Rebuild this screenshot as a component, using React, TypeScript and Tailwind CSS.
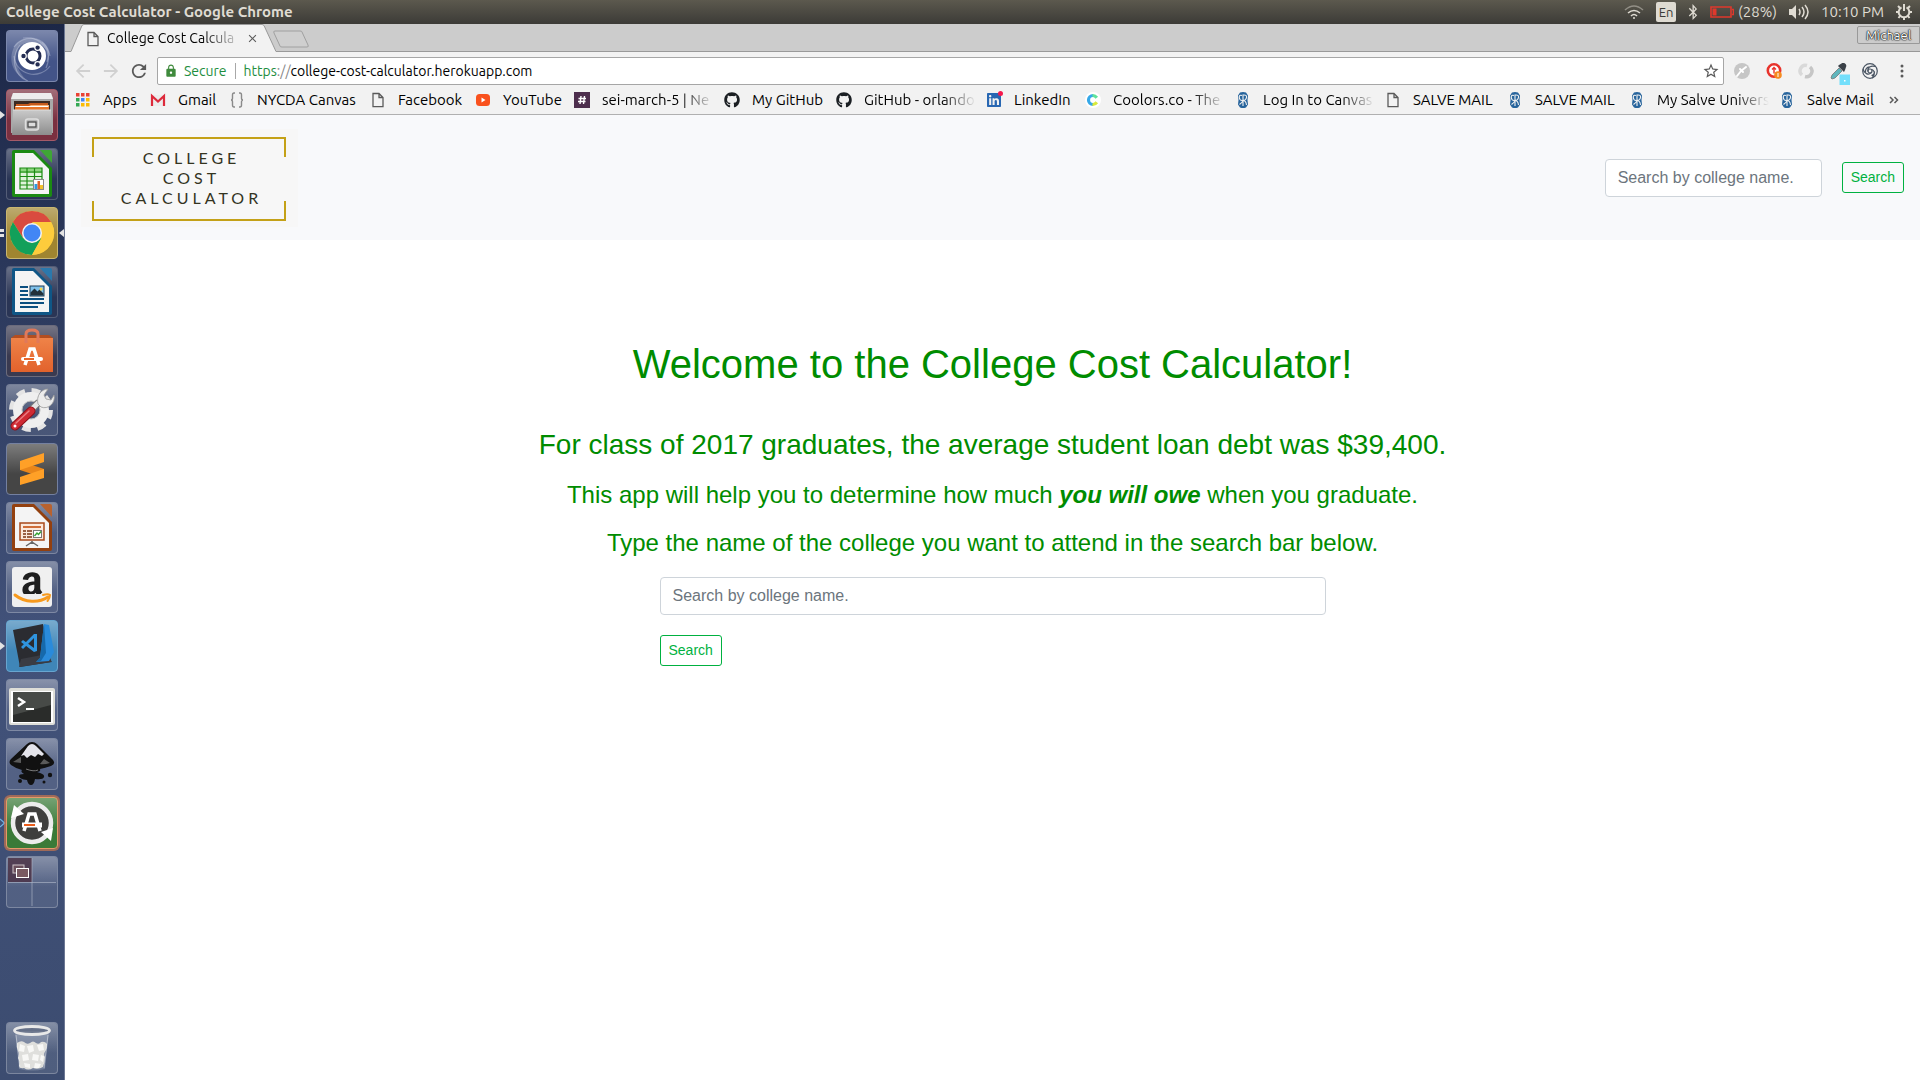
import React from "react";
import { FaAmazon, FaGithub, FaBluetoothB, FaLinkedin } from "react-icons/fa";
import { MdRefresh, MdArrowBack, MdArrowForward, MdStarBorder, MdLock, MdClose } from "react-icons/md";

type Kids = { children: React.ReactNode };

/* ---------- launcher ---------- */

function Art({ children }: Kids) {
  return (
    <svg viewBox="0 0 52 52" className="h-full w-full" aria-hidden="true">
      {children}
    </svg>
  );
}

function DashIcon() {
  return (
    <Art>
      <g fill="none" stroke="#c3cbe0" strokeOpacity=".4" strokeWidth="1.2">
        <path d="M8 17C16 4 40 4 44 26" />
        <path d="M17 8C34 6 48 20 40 38" />
        <path d="M44 36C34 50 10 46 8 26" />
        <path d="M22 51C8 46 4 28 14 15" />
        <path d="M36 12c6 5 8 12 5 20" />
      </g>
      <path d="M8 17C16 4 40 4 44 26c-4-12-20-18-30-10C6 24 10 42 22 51 6 44 2 30 8 17Z" fill="#fff" fillOpacity=".2" />
      <circle cx="26" cy="26" r="14" fill="#fff" />
      <circle cx="27" cy="26" r="7" fill="none" stroke="#232c52" strokeWidth="3" />
      <g fill="#232c52" stroke="#fff" strokeWidth="1.2">
        <circle cx="17.5" cy="26" r="2.8" />
        <circle cx="31.6" cy="17.6" r="2.8" />
        <circle cx="31.6" cy="34.4" r="2.8" />
      </g>
    </Art>
  );
}

function FilesIcon() {
  return (
    <Art>
      <defs>
        <linearGradient id="cab" x1="0" y1="0" x2="0" y2="1">
          <stop offset="0" stopColor="#c9c9c9" />
          <stop offset="1" stopColor="#8d8d8d" />
        </linearGradient>
      </defs>
      <path d="M7 4h38l2 5v35H5V9Z" fill="#a9a9a9" />
      <path d="M7 4h38l2 6H5Z" fill="#ededed" />
      <rect x="8" y="12" width="36" height="12" fill="#3d2a22" />
      <path d="M10 15h12l2-1h18v8H10Z" fill="#c65a1c" />
      <path d="M9 17h14l2-1h18v6H9Z" fill="#f6b27a" />
      <rect x="9" y="18" width="34" height="5" fill="#e8772b" />
      <rect x="10" y="17" width="32" height="1" fill="#fff" />
      <path d="M7 21h38l1 25H6Z" fill="url(#cab)" />
      <path d="M7 21h38" stroke="#ddd" />
      <rect x="19.500" y="30" width="13" height="11" rx="2.500" fill="#b5b5b5" stroke="#dedede" strokeWidth="1.500" />
      <rect x="22" y="33" width="8" height="5" fill="#ddd" stroke="#444" strokeWidth="1.200" />
    </Art>
  );
}

function OfficePage({ edge, fold, children }: Kids & { edge: string; fold: string }) {
  return (
    <Art>
      <path d="M8 2h20l18 18v27a2 2 0 0 1-2 2H8a2 2 0 0 1-2-2V4a2 2 0 0 1 2-2Z" fill={edge} />
      <path d="M9 5h18l16 16v25H9Z" fill="#f4f4f4" />
      <path d="M34 2h10a2 2 0 0 1 2 2v11Z" fill={fold} />
      {children}
    </Art>
  );
}

function CalcIcon() {
  return (
    <OfficePage edge="#1b8a12" fold="#3fa636">
      <rect x="14" y="20" width="22" height="21" fill="#dff3da" />
      <rect x="14" y="20" width="22" height="5" fill="#8ed67f" />
      <path d="M14 20h22v21H14ZM14 24h22M14 28.500h22M14 33h22M14 37h22M21 20v21M28.500 20v21" fill="none" stroke="#1b8a12" strokeWidth="1.200" />
      <rect x="27.500" y="31.500" width="10" height="10" fill="#fff" stroke="#888" />
      <path d="M28.500 36h3v5h-3Z" fill="#2f9be0" />
      <path d="M31.500 33h2.500v8h-2.500Z" fill="#e0652a" />
      <path d="M34 37h3v4h-3Z" fill="#f2c12e" />
    </OfficePage>
  );
}

function WriterIcon() {
  return (
    <OfficePage edge="#0f5686" fold="#2b78ac">
      <path d="M14 21h8M14 25h8M14 29h8M14 33h24M14 37h24M14 41h18" stroke="#0b4f80" strokeWidth="1.800" />
      <rect x="24" y="20" width="14" height="10" fill="#7fc1ea" stroke="#1b3d58" />
      <path d="M24.500 29.500v-3l4-4 3 3 2-2 4 4v2Z" fill="#22303a" />
      <circle cx="35" cy="23" r="1.500" fill="#f6d54a" />
    </OfficePage>
  );
}

function ImpressIcon() {
  return (
    <OfficePage edge="#93400f" fold="#b8622f">
      <path d="M26 39v3M26 40l-6 4M26 40l6 4" stroke="#666" strokeWidth="1.500" />
      <rect x="14" y="21" width="24" height="17" fill="#fbe9dd" stroke="#a8481a" strokeWidth="1.500" />
      <path d="M17 25h18" stroke="#cf6d38" strokeWidth="2" />
      <path d="M17 29h3M17 32h3M17 35h3M21 29h5M21 32h5M21 35h5" stroke="#7a3514" strokeWidth="1.600" />
      <rect x="27.500" y="28.500" width="8" height="7" fill="#fff" stroke="#777" />
      <path d="m28.500 34 2.500-3 1.500 1.500 2.500-3" fill="none" stroke="#36a333" strokeWidth="1.400" />
    </OfficePage>
  );
}

function ChromeIcon() {
  return (
    <Art>
      <circle cx="26" cy="26" r="22" fill="#fdcc3c" />
      <path d="M6.900 15A22 22 0 0 1 45.100 15L26 16l-9 15Z" fill="#d94b3f" />
      <path d="M6.900 15A22 22 0 0 0 26 48l9.500-17L26 36l-9-5Z" fill="#12a05a" />
      <path d="M45.100 15H26l9.500 16L26 48A22 22 0 0 0 45.100 15Z" fill="#fdcc3c" />
      <circle cx="26" cy="26" r="10" fill="#f3f3f3" />
      <circle cx="26" cy="26" r="8.500" fill="#4286f5" />
    </Art>
  );
}

function SoftwareIcon() {
  return (
    <Art>
      <defs>
        <linearGradient id="bag" x1="0" y1="0" x2="0" y2="1">
          <stop offset="0" stopColor="#ef8348" />
          <stop offset="1" stopColor="#e2622c" />
        </linearGradient>
      </defs>
      <path d="M5 13 9 10h34l4 3Z" fill="#b34e20" />
      <path d="M5 13h42v34H5Z" fill="url(#bag)" />
      <path d="M20 18V9q0-4 6-4t6 4v9" fill="none" stroke="#e0795a" strokeWidth="3" />
      <path d="m19 40 5-16h4l5 16" fill="none" stroke="#fff" strokeWidth="3.500" />
      <path d="M17 34h18" stroke="#fff" strokeWidth="4" strokeLinecap="round" />
      <path d="M18 34h10" stroke="#e8672b" strokeWidth="1.800" />
    </Art>
  );
}

function SettingsIcon() {
  return (
    <Art>
      <circle cx="25" cy="26" r="19" fill="none" stroke="#e4e4e4" strokeWidth="6" strokeDasharray="8.400 6.520" />
      <circle cx="25" cy="26" r="13.500" fill="none" stroke="#efefef" strokeWidth="9" />
      <circle cx="25" cy="26" r="9" fill="none" stroke="#bdbdbd" strokeWidth="1" />
      <path d="M20 31 33 18" stroke="#777" strokeWidth="7" />
      <path d="M21 30 35 16" stroke="#e6e6e6" strokeWidth="5" />
      <path d="M32 20c-2-8 3-15 10-15l-4 6 2 4 5 1 3-5c2 8-6 15-13 12Z" fill="#ececec" stroke="#999" strokeWidth=".8" />
      <path d="M9 42 25 27" stroke="#8c1019" strokeWidth="9" strokeLinecap="round" />
      <path d="M9 42 25 27" stroke="#cf2a33" strokeWidth="7" strokeLinecap="round" />
      <path d="m10 39 13-12" stroke="#ea7b80" strokeWidth="1.500" strokeLinecap="round" />
      <circle cx="9" cy="42" r="1.500" fill="#fff" />
    </Art>
  );
}

function SublimeIcon() {
  return (
    <Art>
      <path d="m14 18 24 8v9l-24-8Z" fill="#e9861a" />
      <path d="m14 18 24-8v9l-24 8Z" fill="#ffa027" />
      <path d="m14 34 24-8v9l-24 7Z" fill="#ffa027" />
    </Art>
  );
}

function AmazonIcon() {
  return (
    <Art>
      <defs>
        <clipPath id="letter"><rect x="6" y="4" width="40" height="29" /></clipPath>
      </defs>
      <rect x="6" y="6" width="40" height="40" rx="3" fill="#f0f0f0" />
      <g clipPath="url(#letter)">
        <FaAmazon x="8" y="9" size={36} color="#1e1e1e" />
      </g>
      <path d="M9 34c10 8 24 8 33 2" fill="none" stroke="#f79a1e" strokeWidth="3" strokeLinecap="round" />
      <path d="M37 34q5-1.500 7 0 0 3-2.500 6" fill="none" stroke="#f79a1e" strokeWidth="2" strokeLinecap="round" />
    </Art>
  );
}

function CodeIcon() {
  return (
    <Art>
      <path d="M7 10 37 4l8 38-31 5Z" fill="#2b2c31" />
      <path d="m15 39 26-5 5 8-33 5Z" fill="#3a3c43" />
      <path d="M31 14v17l-3 1-13-10 2-2 11 8V18L17 29l-2-2 13-13Z" fill="#2f94df" />
      <path d="M38 4 43 5 48 32l-5 9-13 1 4-4Z" fill="#2a8bdb" />
      <path d="M38 4 34 38l-4 4 5-1 5-8Z" fill="#1669ab" />
    </Art>
  );
}

function TerminalIcon() {
  return (
    <Art>
      <rect x="3" y="9" width="46" height="37" rx="2" fill="#deded8" />
      <rect x="5" y="12" width="42" height="32" fill="#fff" />
      <rect x="7" y="13" width="38" height="30" fill="#2a2c2a" />
      <path d="M7 13h38v13L7 36Z" fill="#474a47" />
      <path d="m12 19 6 4-6 4" fill="none" stroke="#fff" strokeWidth="2.500" />
      <path d="M20 30h8" stroke="#fff" strokeWidth="2" />
    </Art>
  );
}

function InkscapeIcon() {
  return (
    <Art>
      <path d="M26 4q3 0 5 2l16 16q3 4-2 6-6 2-11 3 1 3-3 3 8 2 7 5-1 3-9 2-1 6-4 6t-4-5q-8-1-8-4 0-2 5-2-4-2-2-4Q9 30 5 27q-3-3 0-6L21 6q2-2 5-2Z" fill="#111" />
      <path d="M26 6q2 0 4 2l8 8-2 2-4-2-3 3-4-2-4 3-3-3-3 1 7-10q2-2 4-2Z" fill="#e4e4ea" />
      <path d="m7 24 8-5v6ZM38 21l6 4q-6 2-10 1Z" fill="#5a5a5a" />
      <path d="M20 31q8 3 12 1" fill="none" stroke="#777" />
      <circle cx="44" cy="37" r="2.200" fill="#111" />
      <circle cx="14" cy="43" r="2" fill="#111" />
      <circle cx="38" cy="44" r="1.500" fill="#111" />
    </Art>
  );
}

function UpdaterIcon() {
  return (
    <Art>
      <circle cx="26" cy="26" r="19" fill="#3f3f3d" stroke="#ececec" strokeWidth="4.500" />
      <path d="m5 21 3-13 10 9Z" fill="#fff" />
      <path d="m47 31-2 13-10-9Z" fill="#fff" />
      <path d="m18 34 5-17h6l5 17" fill="none" stroke="#fff" strokeWidth="3.500" />
      <path d="M16 28h20" stroke="#fff" strokeWidth="5" />
      <path d="M18 28h11" stroke="#ea5d1b" strokeWidth="2.200" />
    </Art>
  );
}

function WorkspaceIcon() {
  return (
    <Art>
      <rect x="2" y="2" width="24" height="24" fill="#4b3347" fillOpacity=".85" />
      <path d="M26 2v48M2 26.500h48" stroke="#b4bccd" strokeOpacity=".6" />
      <rect x="7" y="9" width="11" height="8" fill="#6a4f5c" stroke="#cdc4c8" />
      <rect x="10.500" y="12.500" width="12" height="9" fill="#7a5a62" stroke="#fff" />
    </Art>
  );
}

function TrashIcon() {
  return (
    <Art>
      <path d="M9 9h34l-4 38q-13 3-26 0Z" fill="#cfd6e4" fillOpacity=".25" />
      <path d="M11 21q4-3 7-1 3 3 6 1 3-3 6 0 3 2 5-1 4-1 6 2 0 4-1 6-3 4-1 7 0 4-2 10-5 3-10 1-5 3-9 0-4 1-5-2 1-5-1-8 2-4 0-7-2-4-1-8Z" fill="#dfdfdc" />
      <g fill="#f8f8f6">
        <path d="m14 22 5 2-1 6-5-1ZM21 24l6-1 1 6-5 2ZM31 23l6-1 1 6-5 1ZM16 33l6-1 1 6-6 1ZM27 32l6 1-1 6-6-1ZM35 33l3 1-1 6-3-2ZM18 41l6 1v4l-5-1ZM29 41l6 1-2 4h-5Z" />
      </g>
      <ellipse cx="26" cy="8.500" rx="17.500" ry="4" fill="#59627a" fillOpacity=".6" stroke="#e8e8e8" strokeWidth="2.800" />
      <path d="m10 13 4 33M42 13l-4 33" stroke="#fff" strokeOpacity=".4" />
    </Art>
  );
}

const DARK = "bg-[#2a3555] border-white/20";
const MIST = "bg-white/10 border-white/25";
const apps: { name: string; tint: string; icon: React.ReactNode; mark?: string; open?: boolean }[] = [
  { name: "Search your computer", tint: "bg-[#435488] border-white/30", icon: <DashIcon /> },
  { name: "Files", tint: "bg-[#7a3040] border-[#a55a68]", icon: <FilesIcon />, mark: "one" },
  { name: "LibreOffice Calc", tint: DARK, icon: <CalcIcon /> },
  { name: "Google Chrome", tint: "bg-[#a08530] border-[#c9b670]", icon: <ChromeIcon />, mark: "two", open: true },
  { name: "LibreOffice Writer", tint: DARK, icon: <WriterIcon /> },
  { name: "Ubuntu Software", tint: "bg-[#3a3a50] border-white/25", icon: <SoftwareIcon /> },
  { name: "System Settings", tint: MIST, icon: <SettingsIcon /> },
  { name: "Sublime Text", tint: "bg-[#454545] border-[#7480a0]", icon: <SublimeIcon /> },
  { name: "LibreOffice Impress", tint: MIST, icon: <ImpressIcon /> },
  { name: "Amazon", tint: MIST, icon: <AmazonIcon /> },
  { name: "Visual Studio Code", tint: "bg-[#3f86b8] border-[#68a5cf]", icon: <CodeIcon />, mark: "one" },
  { name: "Terminal", tint: MIST, icon: <TerminalIcon /> },
  { name: "Inkscape", tint: MIST, icon: <InkscapeIcon /> },
  { name: "Software Updater", tint: "bg-[#3a7a38] border-[#e59a6a] ring-2 ring-[#e07b45]/60", icon: <UpdaterIcon />, mark: "outline" },
  { name: "Workspace Switcher", tint: MIST, icon: <WorkspaceIcon /> },
];

function Mark({ kind }: { kind: string }) {
  return (
    <svg viewBox="0 0 6 10" className="absolute top-1/2 -left-[6px] h-[10px] w-[6px] -translate-y-1/2" aria-hidden="true">
      {kind === "one" && <path d="M0 1 5 5 0 9Z" fill="#e3e3e3" />}
      {kind === "two" && <path d="M0 1h4v3H0ZM0 6h4v3H0Z" fill="#e3e3e3" />}
      {kind === "outline" && <path d="M0 1 4.500 5 0 9" fill="none" stroke="#6fb4e6" strokeWidth="1.200" />}
    </svg>
  );
}

function Tile({ name, tint, icon, mark, open }: (typeof apps)[number]) {
  return (
    <div className="relative w-[52px]">
      {mark && <Mark kind={mark} />}
      <button aria-label={name} className={"relative block size-[52px] overflow-hidden rounded-[4px] border " + tint}>
        <span className="absolute inset-0 bg-linear-to-b from-white/30 to-transparent to-60%" />
        <span className="absolute -inset-px">{icon}</span>
      </button>
      {open && (
        <svg viewBox="0 0 5 10" className="absolute top-1/2 -right-[6px] h-[10px] w-[5px] -translate-y-1/2" aria-hidden="true">
          <path d="M5 1 0 5l5 4Z" fill="#e3e3e3" />
        </svg>
      )}
    </div>
  );
}

function Launcher() {
  return (
    <nav
      aria-label="Launcher"
      className="flex w-[65px] shrink-0 flex-col gap-[7px] border-r border-[#6c7793] bg-linear-to-b from-[#1c2747] via-[#42527a] via-58% to-[#3c4c70] py-[6px] pl-[6px]"
    >
      {apps.map((a) => (
        <Tile key={a.name} {...a} />
      ))}
      <div className="mt-auto">
        <Tile name="Trash" tint={MIST} icon={<TrashIcon />} />
      </div>
    </nav>
  );
}

/* ---------- system bar ---------- */

function SystemBar() {
  return (
    <header className="flex h-6 items-center bg-linear-to-b from-[#5c594e] to-[#3c3b37] pr-2 pl-[6px] text-[15px] leading-5 text-[#dfdbd2]">
      <h2 className="flex-1 font-bold">College Cost Calculator - Google Chrome</h2>
      <div className="flex items-center">
        <svg viewBox="0 0 20 14" className="mr-3 h-[14px] w-5" fill="none" stroke="currentColor" strokeWidth="1.600">
          <path d="M1 5q9-8 18 0" strokeOpacity=".45" />
          <path d="M4 8q6-5 12 0M7 11q3-3 6 0" />
          <circle cx="10" cy="13" r="1" fill="currentColor" stroke="none" />
        </svg>
        <span className="mr-3 flex size-5 items-center justify-center rounded-[2px] bg-[#dfdbd2] text-[13px] text-[#3c3b37]">En</span>
        <FaBluetoothB className="mr-3 h-4 w-[10px]" />
        <svg viewBox="0 0 24 12" className="mr-1 h-3 w-6">
          <path d="M1 1h20v10H1ZM22 3.500h1.500v5H22" fill="none" stroke="#df382c" strokeWidth="1.600" />
          <path d="M2.500 2.500h4v7h-4Z" fill="#df382c" />
        </svg>
        <span>(28%)</span>
        <svg viewBox="0 0 20 16" className="mr-3 ml-3 h-4 w-5" fill="none" stroke="currentColor" strokeWidth="1.500">
          <path d="M0 5h3l4-4v14l-4-4H0Z" fill="currentColor" stroke="none" />
          <path d="M10 5q2 3 0 6M13 3q4 5 0 10M16 1q6 7 0 14" />
        </svg>
        <time className="mr-3">10:10 PM</time>
        <svg viewBox="0 0 16 16" className="size-4" fill="none" stroke="currentColor">
          <path d="M5.500 3.300a5.300 5.300 0 1 0 5 0" strokeWidth="2" />
          <path d="M8 0v7" strokeWidth="2" />
          <path d="m2 2 2 2M14 2l-2 2M0 8h2.500M16 8h-2.500M2.500 14 4 12M13.500 14 12 12M8 16v-2.500" strokeWidth="2" />
        </svg>
      </div>
    </header>
  );
}

/* ---------- browser chrome ---------- */

function PageIcon() {
  return (
    <svg viewBox="0 0 16 16" className="size-4 shrink-0" fill="none" stroke="#5a5a5a" strokeWidth="1.300">
      <path d="M3 1.500h6l4 4v9.200H3ZM9 1.500v4h4" />
    </svg>
  );
}

function TabStrip() {
  return (
    <div className="flex h-7 bg-[#cccccc]">
      <div className="w-[6px] border-b border-[#999]" />
      <div className="relative h-7 w-[205px]">
        <svg viewBox="0 0 205 28" className="absolute inset-0 h-full w-full" preserveAspectRatio="none" aria-hidden="true">
          <path d="M0 27.500 11 1.500Q12 .5 13 .5h178q1 0 2 1l12 26V28H0Z" fill="#f2f2f2" />
          <path d="M0 27.500 11 1.500Q12 .5 13 .5h178q1 0 2 1l12 26" fill="none" stroke="#999" />
        </svg>
        <div className="relative flex h-full items-center px-[14px] pt-px">
          <PageIcon />
          <span className="ml-[6px] w-[136px] text-[14px] whitespace-nowrap text-black mask-r-from-70% mask-r-to-100%">
            College Cost Calcula
          </span>
          <button aria-label="Close tab" className="ml-[3px] text-[#5a5a5a]">
            <MdClose size={13} />
          </button>
        </div>
      </div>
      <div className="flex flex-1 items-start justify-between border-b border-[#999]">
        <button aria-label="New tab" className="mt-[6px] -ml-[3px]">
          <svg viewBox="0 0 36 18" className="h-[18px] w-9">
            <path d="M1 3Q0 1 2 1h25q2 0 2 1l6 13q1 2-1 2H9q-2 0-2-1Z" fill="#cfcfcf" stroke="#a0a0a0" />
          </svg>
        </button>
        <button className="mt-[2px] h-[18px] w-[63px] rounded-l-[2px] border border-[#999] text-[13px] leading-4 text-white [text-shadow:0_0_2px_#000,0_0_1px_#000,0_0_1px_#000]">
          Michael
        </button>
      </div>
    </div>
  );
}

function Toolbar() {
  return (
    <div className="flex h-[34px] items-center gap-3 bg-[#f2f2f2] px-[10px] pt-1">
      <button aria-label="Back" className="text-[#d0d0d0]"><MdArrowBack size={16} viewBox="3 3 18 18" /></button>
      <button aria-label="Forward" className="text-[#d0d0d0]"><MdArrowForward size={16} viewBox="3 3 18 18" /></button>
      <button aria-label="Reload" className="text-[#5a5a5a]"><MdRefresh size={16} viewBox="3 3 18 18" /></button>
      <div className="-ml-[2px] flex h-7 flex-1 items-center rounded-[2px] border border-[#a6a6a6] bg-white px-[6px] text-[14px]">
        <MdLock size={14} color="#3f8a3c" />
        <span className="ml-[6px] text-[#1e8e3e]">Secure</span>
        <span className="mx-2 h-4 w-px bg-[#a8a8a8]" />
        <a href="https://college-cost-calculator.herokuapp.com" className="flex-1 text-black">
          <span className="text-[#1e8e3e]">https</span>
          <span className="text-[#888]">://</span>college-cost-calculator.herokuapp.com
        </a>
        <button aria-label="Bookmark this page" className="-mr-[3px] text-[#5a5a5a]"><MdStarBorder size={18} /></button>
      </div>
      <div className="-ml-[2px] flex items-center gap-4">
        <svg viewBox="0 0 16 16" className="size-4">
          <circle cx="8" cy="8" r="8" fill="#c6c6c6" />
          <path d="m3 13 4-5M7 8l5-4M6 6l3 3" fill="none" stroke="#fff" strokeWidth="2" strokeLinecap="round" />
        </svg>
        <svg viewBox="0 0 16 16" className="size-4">
          <circle cx="8" cy="7.500" r="6.200" fill="#fff" stroke="#e8332c" strokeWidth="2.600" />
          <path d="M8 10.500V5M6 6.500l2-2 2 2" fill="none" stroke="#e8332c" strokeWidth="1.400" />
          <circle cx="12" cy="12" r="3.800" fill="#f58a1f" />
          <path d="M12 10v4" stroke="#fff" />
        </svg>
        <svg viewBox="0 0 16 16" className="size-4" fill="none" strokeWidth="3.500">
          <path d="M9 2.500A5.500 5.500 0 0 0 4 12" stroke="#d9d9d9" />
          <path d="M7 13.500A5.500 5.500 0 0 0 12 4" stroke="#c6c6c6" />
        </svg>
        <svg viewBox="0 0 20 22" className="-mr-1 h-[22px] w-5 translate-y-[3px]">
          <path d="m1 15 1-3 7-7 3 3-7 7-3 1Z" fill="#5fb6bd" stroke="#777" strokeWidth=".8" />
          <path d="m8 3 6 6 1-2 1-3q1-2-1-3.500t-3.500 0L9 2Z" fill="#3b4148" />
          <path d="M9.500 11.500h10.500V22H9.500Z" fill="#73dffb" />
          <path d="M14 17h1.500v1.500H14Z" fill="#fff" />
        </svg>
        <svg viewBox="0 0 16 16" className="size-4" fill="none" stroke="#4a5563" strokeWidth="1.200">
          <circle cx="8" cy="8" r="7.300" />
          <circle cx="8" cy="8" r="2" />
          <path d="M6 8.500C5 5 8.500 2 13.500 3.500M9.500 6.500c3.500 1 4 5.500.5 8.500M9 9.800C6.500 12.500 2 10.500 1 6M7.500 3.800C5 4 3.200 6 3.500 9M12.500 8.500c0 1.800-1 3.500-3 4" />
        </svg>
        <button aria-label="Menu" className="flex w-4 justify-center">
          <svg viewBox="0 0 4 14" className="h-[14px] w-1" fill="#5a5a5a">
            <circle cx="2" cy="2" r="1.500" /><circle cx="2" cy="7" r="1.500" /><circle cx="2" cy="12" r="1.500" />
          </svg>
        </button>
      </div>
    </div>
  );
}

function AppsIcon() {
  const colors = ["#ea4335", "#ea4335", "#ea4335", "#34a853", "#4285f4", "#fbbc05", "#34a853", "#fbbc05", "#fbbc05"];
  return (
    <svg viewBox="0 0 16 16" className="size-4 shrink-0">
      {colors.map((c, i) => (
        <rect key={i} x={1 + (i % 3) * 5} y={1 + Math.floor(i / 3) * 5} width="3.500" height="3.500" fill={c} />
      ))}
    </svg>
  );
}

function MailIcon() {
  return (
    <svg viewBox="0 0 16 16" className="size-4 shrink-0">
      <path d="M1 3h14v11H1Z" fill="#ececec" />
      <path d="M2 14V4l6 5.500L14 4v10" fill="none" stroke="#dd2a3b" strokeWidth="2.200" />
    </svg>
  );
}

function BracesIcon() {
  return (
    <svg viewBox="0 0 16 16" className="size-4 shrink-0" fill="none" stroke="#8a8a8a" strokeWidth="1.400">
      <path d="M6 1H5Q3.500 1 3.500 3v3Q3.500 8 2 8q1.500 0 1.500 2v3Q3.500 15 5 15h1M10 1h1q1.500 0 1.500 2v3q0 2 1.500 2-1.500 0-1.500 2v3q0 2-1.500 2h-1" />
    </svg>
  );
}

function VideoIcon() {
  return (
    <svg viewBox="0 0 16 16" className="size-4 shrink-0">
      <rect x="1" y="2" width="14" height="12" rx="3.500" fill="#f9511d" />
      <path d="m6.500 5.500 4 2.500-4 2.500Z" fill="#fff" />
    </svg>
  );
}

function HashIcon() {
  return (
    <svg viewBox="0 0 16 16" className="size-4 shrink-0">
      <path d="M0 0h16v16H0Z" fill="#4d2e4d" />
      <path d="M7 4 6 12M10.500 4l-1 8M4.500 6.500H12M4 9.500h7.500" stroke="#fff" strokeWidth="1.400" />
    </svg>
  );
}

function LinkedInIcon() {
  return (
    <span className="relative size-4 shrink-0">
      <FaLinkedin size={16} color="#2867b2" />
      <span className="absolute -top-px -right-px size-[5px] rounded-full bg-[#f5184c]" />
    </span>
  );
}

function PaletteIcon() {
  return (
    <svg viewBox="0 0 16 16" className="size-4 shrink-0" fill="none" strokeWidth="3.200">
      <circle cx="8" cy="8" r="8" fill="#fff" />
      <path d="M8 3.500A4.500 4.500 0 0 0 8 12.500" stroke="#35a8e8" />
      <path d="M7.500 3.500q2.500-.2 4.300 2.200" stroke="#5fe39a" />
      <path d="M7.500 12.500q2.500.2 4.300-2.200" stroke="#d8ea3c" />
    </svg>
  );
}

function SealIcon() {
  return (
    <svg viewBox="0 0 16 16" className="size-4 shrink-0">
      <path d="M5 .5q3-1 6 0l2 3-.5 4.500.5 4.500-2 3q-3 1-6 0l-2-3L3.500 8 3 3.500Z" fill="#27649c" />
      <path d="M7 3.500Q4 2.500 4.300 5.500T7 8.500t-2.500 4M8 14V3q4-.5 3.500 2.500T8 8.500q3 0 3.500 4.500" fill="none" stroke="#f2f2f2" strokeWidth="1.100" />
    </svg>
  );
}

const gh = <FaGithub size={16} color="#1b1f23" className="shrink-0" />;
const bookmarks: { text: string; w: string; icon: React.ReactNode; fade?: boolean }[] = [
  { text: "Apps", w: "w-[75px]", icon: <AppsIcon /> },
  { text: "Gmail", w: "w-[79px]", icon: <MailIcon /> },
  { text: "NYCDA Canvas", w: "w-[141px]", icon: <BracesIcon /> },
  { text: "Facebook", w: "w-[105px]", icon: <PageIcon /> },
  { text: "YouTube", w: "w-[99px]", icon: <VideoIcon /> },
  { text: "sei-march-5 | Ne", w: "w-[150px]", icon: <HashIcon />, fade: true },
  { text: "My GitHub", w: "w-[112px]", icon: gh },
  { text: "GitHub - orlando", w: "w-[150px]", icon: gh, fade: true },
  { text: "LinkedIn", w: "w-[99px]", icon: <LinkedInIcon /> },
  { text: "Coolors.co - The", w: "w-[150px]", icon: <PaletteIcon />, fade: true },
  { text: "Log In to Canvas", w: "w-[150px]", icon: <SealIcon />, fade: true },
  { text: "SALVE MAIL", w: "w-[122px]", icon: <PageIcon /> },
  { text: "SALVE MAIL", w: "w-[122px]", icon: <SealIcon /> },
  { text: "My Salve Univers", w: "w-[150px]", icon: <SealIcon />, fade: true },
  { text: "Salve Mail", w: "w-[110px]", icon: <SealIcon /> },
];

function BookmarkBar() {
  return (
    <div className="flex h-[29px] items-center border-b border-[#b0b0b0] bg-[#f2f2f2] pl-[10px] text-[15px] leading-5 text-black">
      {bookmarks.map((b, i) => (
        <a key={i} href="#" className={"flex shrink-0 items-center gap-3 " + b.w}>
          {b.icon}
          <span className={"whitespace-nowrap " + (b.fade ? "w-[112px] mask-r-from-70% mask-r-to-100%" : "")}>{b.text}</span>
        </a>
      ))}
      <button aria-label="More bookmarks">
        <svg viewBox="0 0 10 8" className="h-2 w-[10px]" fill="none" stroke="#5a5a5a" strokeWidth="1.500">
          <path d="m1 1 3 3-3 3M5.500 1l3 3-3 3" />
        </svg>
      </button>
    </div>
  );
}

/* ---------- web page ---------- */

function Brand() {
  return (
    <a href="#" className="relative flex h-[98px] w-[217px] flex-col justify-center bg-[#f7f7f7] pl-1 text-center font-['Lato',sans-serif] text-[16px] leading-5 tracking-[4px] text-[#34341f]">
      <svg viewBox="0 0 194 84" className="absolute top-2 left-[11px] h-[84px] w-[194px]" fill="none" stroke="#c4a117" strokeWidth="2" aria-hidden="true">
        <path d="M1 20V1h192v19M1 64v19h192V64" />
      </svg>
      <span>COLLEGE</span>
      <span>COST</span>
      <span>CALCULATOR</span>
    </a>
  );
}

const field = "h-[38px] rounded-[4px] border border-[#ced4da] bg-white px-3 text-[16px] text-[#495057] placeholder:text-[#6c757d] placeholder:opacity-100";
const action = "h-[31px] rounded-[3px] border border-[#00b140] px-2 text-[14px] leading-[21px] text-[#00b140]";

function WebPage() {
  return (
    <div className="flex flex-1 flex-col bg-white font-['Liberation_Sans',Arial,sans-serif]">
      <div className="flex h-[125px] items-center justify-between bg-[#f8f9fb] px-4">
        <Brand />
        <form className="flex items-center gap-5" onSubmit={(e) => e.preventDefault()}>
          <input aria-label="College name" placeholder="Search by college name." className={"w-[217px] " + field} />
          <button className={action}>Search</button>
        </form>
      </div>
      <main className="px-4 pt-[100px] text-center text-[#008c00]">
        <h1 className="text-[40px] leading-[48px]">Welcome to the College Cost Calculator!</h1>
        <h3 className="mt-10 text-[28px] leading-[34px]">For class of 2017 graduates, the average student loan debt was $39,400.</h3>
        <h4 className="mt-[18px] text-[24px] leading-[29px]">
          This app will help you to determine how much <strong><em>you will owe</em></strong> when you graduate.
        </h4>
        <h4 className="mt-[19px] text-[24px] leading-[29px]">Type the name of the college you want to attend in the search bar below.</h4>
        <form className="mx-auto mt-5 flex max-w-[666px] flex-col items-start gap-5" onSubmit={(e) => e.preventDefault()}>
          <input aria-label="College to look up" placeholder="Search by college name." className={"w-full " + field} />
          <button className={action}>Search</button>
        </form>
      </main>
    </div>
  );
}

export default function App() {
  return (
    <div className="flex min-h-screen flex-col font-['Ubuntu','Noto_Sans',sans-serif]">
      <SystemBar />
      <div className="flex flex-1">
        <Launcher />
        <div className="flex min-w-0 flex-1 flex-col">
          <TabStrip />
          <Toolbar />
          <BookmarkBar />
          <WebPage />
        </div>
      </div>
    </div>
  );
}
